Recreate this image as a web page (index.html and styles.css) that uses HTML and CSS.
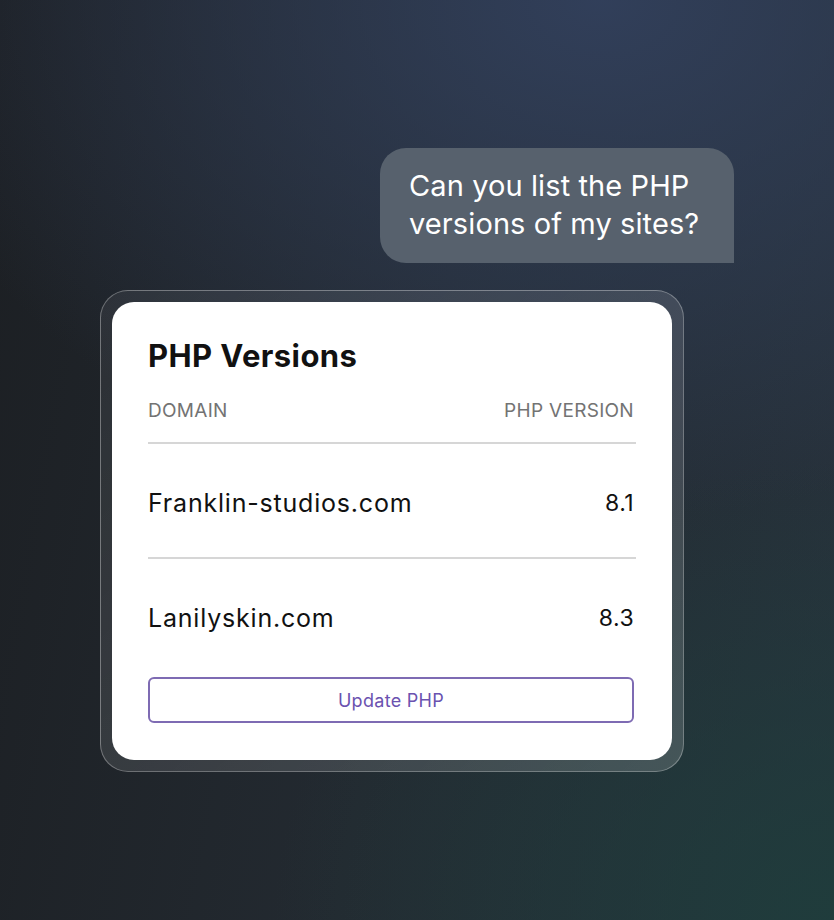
FILE: index.html
```html
<!DOCTYPE html>
<html lang="en">
<head>
    <meta charset="UTF-8">
    <meta name="viewport" content="width=device-width, initial-scale=1.0">
    <title>PHP Versions</title>
    <link rel="stylesheet" href="styles.css">
</head>
<body>
    <div class="chat">
        <!-- User message -->
        <div class="bubble">Can you list the PHP versions of my sites?</div>

        <!-- Answer card -->
        <div class="card-frame">
            <div class="card">
                <h2>PHP Versions</h2>
                <div class="row row-head">
                    <span>Domain</span>
                    <span>PHP Version</span>
                </div>
                <div class="row">
                    <span class="domain">Franklin-studios.com</span>
                    <span class="version">8.1</span>
                </div>
                <div class="row row-last">
                    <span class="domain">Lanilyskin.com</span>
                    <span class="version">8.3</span>
                </div>
                <button type="button">Update PHP</button>
            </div>
        </div>
    </div>
</body>
</html>
```

FILE: styles.css
```css
html, body {
    height: 100%;
}
body {
    margin: 0;
    font-family: Inter, "Noto Sans", sans-serif;
    background-color: #1f2428;
    background-image:
        radial-gradient(ellipse 720px 520px at 600px 0px, rgba(50, 64, 92, 0.95), rgba(50, 64, 92, 0) 100%),
        radial-gradient(ellipse 560px 460px at 834px 920px, rgba(30, 62, 60, 0.85), rgba(30, 62, 60, 0) 100%),
        linear-gradient(100deg, #1c1f23 0%, #232a31 50%, #27323c 100%);
}
.chat {
    display: flex;
    flex-direction: column;
    padding: 148px 100px 0;
}
.bubble {
    align-self: flex-end;
    width: 354px;
    box-sizing: border-box;
    padding: 19px 20px 20px 29px;
    background-color: #57616d;
    color: #fff;
    font-size: 29px;
    line-height: 38px;
    letter-spacing: 0.1px;
    border-radius: 26px 26px 0 26px;
}
.card-frame {
    margin-top: 27px;
    width: 584px;
    box-sizing: border-box;
    padding: 11px;
    border-radius: 28px;
    border: 1.5px solid rgba(255, 255, 255, 0.3);
    background: linear-gradient(135deg, rgba(255, 255, 255, 0.06), rgba(255, 255, 255, 0.16));
}
.card {
    background-color: #fff;
    border-radius: 22px;
    padding: 36px 36px 37px;
}
h2 {
    margin: 0 0 26px;
    font-size: 31px;
    line-height: 35px;
    font-weight: 700;
    letter-spacing: 0.4px;
    color: #111;
}
.row {
    display: flex;
    justify-content: space-between;
    align-items: center;
    height: 108px;
    padding: 5px 2px 0 0;
    border-bottom: 2px solid #d6d6d6;
}
.row-head {
    height: auto;
    padding: 0 2px 19px 0;
    font-size: 19px;
    line-height: 24px;
    letter-spacing: 0.3px;
    text-transform: uppercase;
    color: #737373;
}
.row-last {
    border-bottom: none;
}
.domain {
    font-size: 25px;
    letter-spacing: 0.8px;
    color: #111;
}
.version {
    font-size: 23px;
    letter-spacing: 0.4px;
    color: #111;
}
button {
    display: block;
    width: 486px;
    height: 46px;
    margin-top: 5px;
    background-color: #fff;
    border: 2px solid #7e6bb3;
    border-radius: 6px;
    color: #6b52b0;
    font-family: inherit;
    font-size: 18px;
    letter-spacing: 0.3px;
    cursor: pointer;
}
```
